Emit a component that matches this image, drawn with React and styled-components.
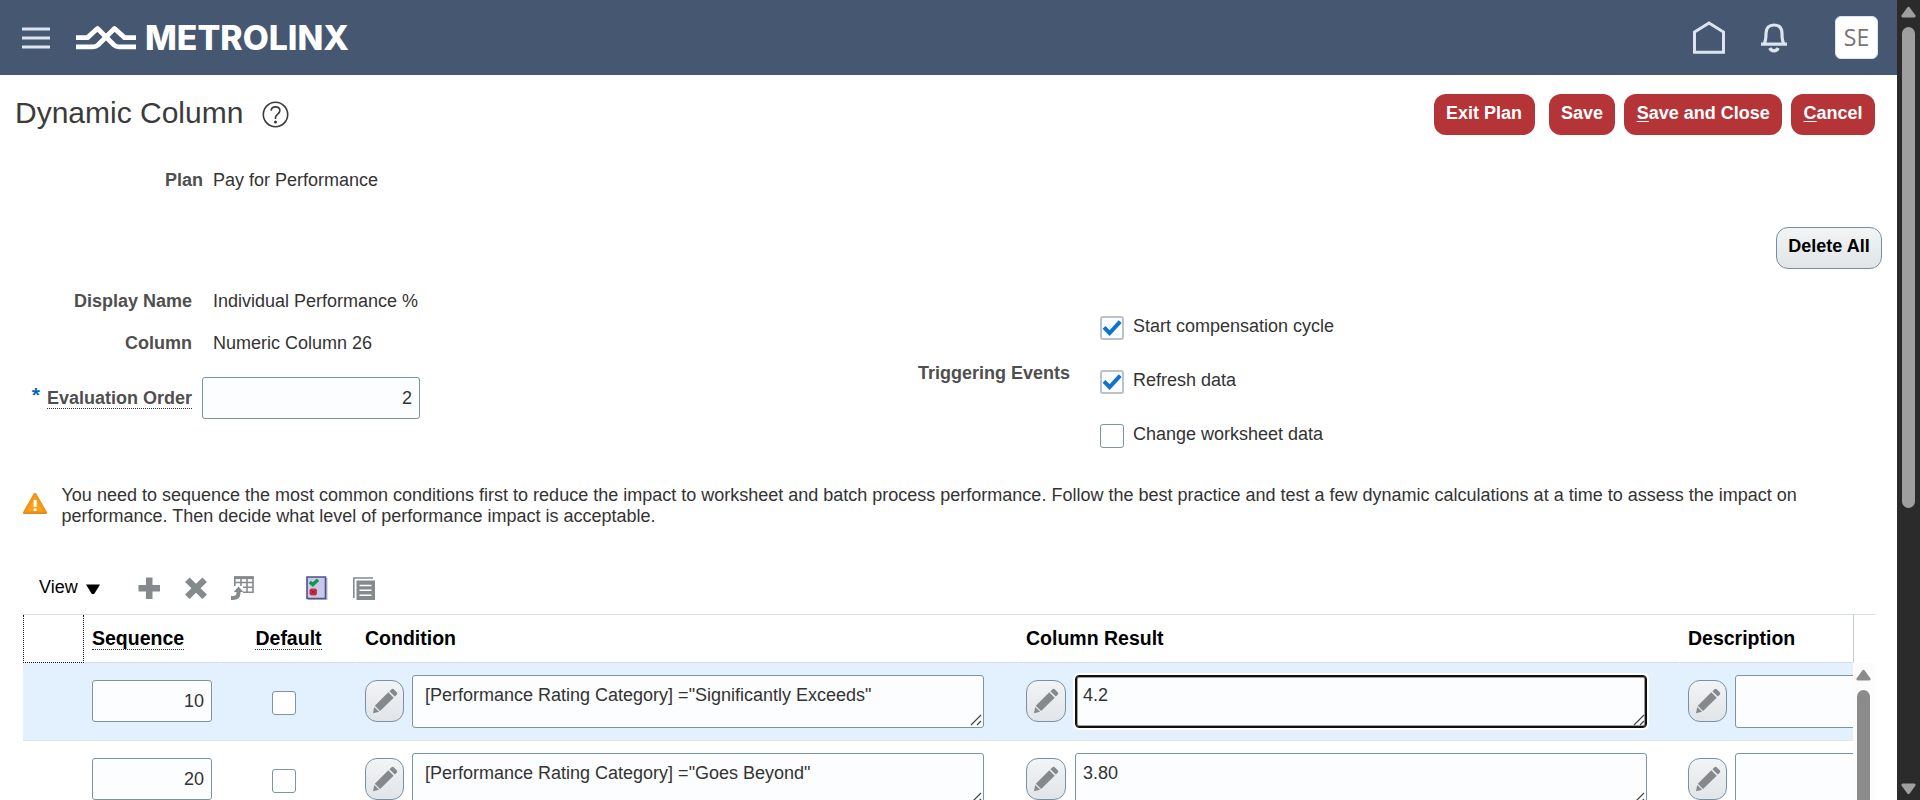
import React from "react";
import styled, { createGlobalStyle, css } from "styled-components";

const GlobalStyle = createGlobalStyle`
  *, *::before, *::after { box-sizing: border-box; }
  body {
    margin: 0;
    overflow: hidden;
    background: #fff;
    color: #333;
    font: 18px/20px "Liberation Sans", Arial, sans-serif;
  }
  svg { display: block; flex: none; }
`;

const Viewport = styled.div`
  display: flex;
  width: 1920px;
  height: 800px;
  overflow: hidden;
`;

const Page = styled.main`
  display: flex;
  flex-direction: column;
  width: 1897px;
  height: 800px;
  overflow: hidden;
`;

/* Scrollbars */
const Track = styled.div`
  display: flex;
  flex-direction: column;
  align-items: center;
  flex: none;
  width: ${(p) => p.$width}px;
  padding: 6px ${(p) => p.$inset || 0}px 0 0;
  background: ${(p) => p.$bg};
  color: ${(p) => p.$fg};
`;

const Thumb = styled.div`
  flex: none;
  width: 13px;
  height: ${(p) => p.$height}px;
  margin-top: ${(p) => p.$gap}px;
  border-radius: 7px;
  background: currentColor;
`;

const TrackEnd = styled.div`
  margin-top: auto;
  padding-bottom: 5px;
`;

/* Top banner */
const Banner = styled.header`
  display: flex;
  align-items: center;
  flex: none;
  height: 75px;
  padding: 0 19px 0 22px;
  background: #465771;
  color: #dbe4ef;
`;

const Brand = styled.svg`
  margin-left: 26px;
`;

const BrandText = styled.text`
  font-family: Inter, "Open Sans", sans-serif;
  font-size: 33.4px;
  font-weight: 800;
`;

const BannerActions = styled.div`
  display: flex;
  align-items: center;
  margin-left: auto;
`;

const BellIcon = styled.svg`
  margin: 0 48px 0 36px;
`;

const Avatar = styled.div`
  width: 43px;
  height: 43px;
  border: 1px solid #dbe4ef;
  border-radius: 6px;
  background: #fff;
  color: #767676;
  font: 23px/41px "Open Sans", "Noto Sans", sans-serif;
  text-align: center;
`;

/* Title bar */
const TitleBar = styled.div`
  display: flex;
  align-items: flex-start;
  flex: none;
  height: 95px;
  padding: 19px 22px 0 15px;
`;

const Title = styled.h1`
  margin: 2px 19px 0 0;
  color: #3b3b3b;
  font-size: 30px;
  font-weight: 400;
  line-height: 34px;
`;

const HelpIcon = styled.svg`
  margin-top: 7px;
`;

const TitleActions = styled.div`
  display: flex;
  gap: 9px;
  margin-left: auto;
`;

const buttonBase = css`
  border-radius: 12px;
  font: bold 18px/20px "Liberation Sans", Arial, sans-serif;
  white-space: nowrap;
`;

const PrimaryButton = styled.button`
  ${buttonBase}
  height: 41px;
  margin: 0 ${(p) => (p.$spaced ? 5 : 0)}px 0 0;
  padding: 0 12.4px 3px;
  border: 0;
  background: #b43438;
  color: #fff;
`;

const SecondaryButton = styled.button`
  ${buttonBase}
  width: 106px;
  height: 42px;
  padding: 0 0 5px;
  border: 1px solid #758ea5;
  background: linear-gradient(#f2f4f5, #e1e5e8);
  color: #000;
`;

const AccessKey = styled.span`
  text-decoration: underline;
  text-underline-offset: 2px;
  text-decoration-thickness: 1px;
`;

/* Form */
const Field = styled.div`
  display: flex;
  align-items: center;
  height: ${(p) => p.$height || 20}px;
  margin-top: ${(p) => p.$top || 0}px;
`;

const Label = styled.div`
  display: flex;
  justify-content: flex-end;
  flex: none;
  width: ${(p) => p.$width || 192}px;
  margin: ${(p) => p.$top || 0}px ${(p) => p.$gap || 21}px 0 0;
  color: #4f4f4f;
  font-weight: bold;
`;

const Hint = styled.span`
  height: ${(p) => p.$height || 21}px;
  border-bottom: 1px dotted #333;
`;

const Required = styled.span`
  margin: -3px 7px 0 0;
  color: #0a68b0;
  font-size: 21px;
`;

const NumberInput = styled.div`
  flex: none;
  width: ${(p) => p.$width}px;
  height: 42px;
  padding: 10px 7px 0;
  border: 1px solid #7d95a3;
  border-radius: 3px;
  background: #fcfdfe;
  color: #333;
  text-align: right;
`;

const ActionRow = styled.div`
  display: flex;
  justify-content: flex-end;
  margin-top: 37px;
  padding-right: 15px;
`;

const FormColumns = styled.section`
  display: grid;
  grid-template-columns: 900px 1fr;
  flex: none;
  height: 216px;
`;

const FormColumn = styled.div`
  padding-top: ${(p) => p.$top}px;
`;

const EventField = styled.div`
  display: flex;
  align-items: flex-start;
`;

const EventList = styled.div`
  display: flex;
  flex-direction: column;
  gap: 30px;
`;

const EventOption = styled.div`
  display: flex;
  gap: 9px;
  height: 24px;
`;

const Box = styled.span`
  display: block;
  flex: none;
  width: 24px;
  height: 24px;
  border: ${(p) => (p.$checked ? "2px solid #bac3cc" : "1px solid #7d95a3")};
  border-radius: 3px;
  background: ${(p) => (p.$checked ? "#fcfdfe" : "#fff")};
`;

/* Warning */
const Notice = styled.div`
  display: flex;
  flex: none;
  height: 91px;
  padding: 0 22px 0 22px;
  line-height: 21px;
`;

const NoticeText = styled.p`
  margin: 0 0 0 13.5px;
`;

const WarningIcon = styled.svg`
  margin-top: 7px;
`;

/* Toolbar */
const Toolbar = styled.div`
  display: flex;
  align-items: flex-start;
  flex: none;
  height: 38px;
  padding-left: 39px;
  color: #858a8d;
`;

const MenuButton = styled.div`
  display: flex;
  align-items: flex-start;
  gap: 8px;
  width: 99px;
  padding-top: 1px;
  color: #000;
`;

const Caret = styled.svg`
  margin-top: 7px;
`;

const ToolIcon = styled.svg`
  margin-right: ${(p) => p.$gap || 0}px;
`;

/* Table */
const Table = styled.section`
  flex: none;
  width: 1852px;
  margin-left: 23px;
  border-top: 1px solid #d6dfe6;
`;

const columns = "62px 136px 136px 662px 661px 1fr";

const HeaderRow = styled.div`
  display: grid;
  grid-template-columns: ${columns};
  width: 1831px;
  height: 48px;
  border-right: 1px solid #c4ccd2;
`;

const HeaderCell = styled.div`
  display: flex;
  justify-content: ${(p) => (p.$center ? "center" : "flex-start")};
  padding: 12px 0 0 ${(p) => p.$pad || 0}px;
  border-bottom: 1px solid #d6dfe6;
  border-right: 1px solid #fff;
  color: #000;
  font-size: 19.5px;
  font-weight: bold;
  line-height: 22px;
`;

const CornerCell = styled.div`
  width: 61px;
  border: 1px dotted #111;
  border-top: 0;
`;

const TableBody = styled.div`
  display: flex;
  height: 138px;
`;

const Rows = styled.div`
  width: 1830px;
  overflow: hidden;
`;

const Row = styled.div`
  display: grid;
  grid-template-columns: ${columns};
  height: 78px;
  border-bottom: 1px solid #e3e7ea;
  background: ${(p) => (p.$selected ? "#e3f1ff" : "#fff")};
`;

const Cell = styled.div`
  display: flex;
  min-width: 0;
  padding: 17px 0 0 ${(p) => p.$left}px;
`;

const PencilButton = styled.button`
  display: flex;
  align-items: center;
  justify-content: center;
  flex: none;
  width: ${(p) => p.$width}px;
  height: 42px;
  margin: 0;
  padding: 0;
  border: 1px solid #7590a8;
  border-radius: 12px;
  background: linear-gradient(#f2f4f5, #e1e5e8);
`;

const TextBox = styled.div`
  display: flex;
  justify-content: space-between;
  flex: none;
  width: 572px;
  height: 53px;
  margin: -5px 0 0 ${(p) => p.$gap}px;
  padding: 9px 1px 1px 7px;
  border: 1px solid #7d95a3;
  border-radius: 3px;
  background: #fcfdfe;
  white-space: pre;
  ${(p) =>
    p.$focused &&
    css`
      border-color: #101010;
      border-radius: 4px;
      box-shadow: inset 0 0 0 1px #101010, inset 0 0 0 2px #a0a09e, 0 0 0 2px #fff;
    `}
`;

const Grip = styled.svg`
  align-self: flex-end;
`;

const Pencil = () => (
  <svg width="26" height="26" viewBox="0 0 26 26" fill="#85898c">
    <path d="M17.4 3.2 22.8 8.6 24.7 6.7C25.5 5.9 25.4 5 24.7 4.3L21.7 1.3C21 .6 20.1.6 19.3 1.4Z" />
    <path d="M16.3 4.3 21.7 9.7 8.1 23.1 2.8 17.8Z" />
    <path d="M2.2 18.9 7.1 23.7 1 25.2Z" />
  </svg>
);

const ResizeGrip = () => (
  <Grip width="12" height="12" viewBox="0 0 12 12" stroke="#444" strokeWidth="1.2">
    <path d="M1 11 11 1M7 11 11 7" />
  </Grip>
);

const Checkbox = ({ checked }) => (
  <Box $checked={checked}>
    {checked && (
      <svg width="20" height="20" viewBox="0 0 20 20" fill="none" stroke="#0f74d1" strokeWidth="4">
        <path d="M2 9.3 7.6 15 18.2 3.6" />
      </svg>
    )}
  </Box>
);

const ArrowIcon = ({ down }) => (
  <svg width="15" height="12" viewBox="0 0 15 12" fill="currentColor">
    <path
      transform={down ? "rotate(180 7.5 6)" : undefined}
      d="M6.3 1.5Q7.5 0 8.7 1.5L14.5 9.4Q15 11.4 13.2 11.4H1.8Q0 11.4 .5 9.4Z"
    />
  </svg>
);

const Logo = () => (
  <Brand width="290" height="40" viewBox="0 0 290 40">
    <g fill="none" stroke="#fff" strokeWidth="4.8" strokeLinejoin="round">
      <path d="M0 19.6H11.500L21.500 10.500 38 27Q40 28.800 43 28.800H60" />
      <path d="M60 19.600H48.500L38.500 10.500 22 27Q20 28.800 17 28.800H0" />
    </g>
    <BrandText x="69" y="32" fill="#fff" textLength="204" lengthAdjust="spacingAndGlyphs">
      METROLINX
    </BrandText>
  </Brand>
);

const rows = [
  { seq: 10, condition: ' [Performance Rating Category] ="Significantly Exceeds"', result: "4.2", selected: true },
  { seq: 20, condition: ' [Performance Rating Category] ="Goes Beyond"', result: "3.80" },
];

const events = [
  ["Start compensation cycle", true],
  ["Refresh data", true],
  ["Change worksheet data", false],
];

export default function App() {
  return (
    <Viewport>
      <GlobalStyle />
      <Page>
        <Banner>
          <svg width="28" height="22" viewBox="0 0 28 22" fill="currentColor">
            <path d="M0 .5H28V3.500H0ZM0 9.500H28V12.500H0ZM0 18.500H28V21.500H0Z" />
          </svg>
          <Logo />
          <BannerActions>
            <svg width="32" height="33" viewBox="0 0 32 33" fill="none" stroke="currentColor" strokeWidth="3">
              <path d="M1.500 31.200V11L16 2 30.500 11V31.200Z" />
            </svg>
            <BellIcon width="26" height="30" viewBox="0 0 26 30" fill="none" stroke="currentColor" strokeWidth="3.2">
              <path d="M0 21.200H26M3 21C5 18 5 15 5 10.500C5 5 8 2 13 2S21 5 21 10.500C21 15 21 18 23 21" />
              <path d="M8.800 25Q10 27.800 13 27.800T17.200 25" />
            </BellIcon>
            <Avatar>SE</Avatar>
          </BannerActions>
        </Banner>

        <TitleBar>
          <Title>Dynamic Column</Title>
          <HelpIcon width="27" height="27" viewBox="0 0 27 27" fill="none" stroke="#3b3b3b" strokeWidth="1.6">
            <circle cx="13.500" cy="13.500" r="12.200" />
            <path d="M9.200 9.800C9.200 7.200 11 5.900 13.500 5.900S17.900 7.300 17.900 9.600C17.900 13 13.500 13.200 13.500 16.800V18" />
            <circle cx="13.500" cy="21" r="1.500" fill="#3b3b3b" stroke="none" />
          </HelpIcon>
          <TitleActions>
            <PrimaryButton $spaced>Exit Plan</PrimaryButton>
            <PrimaryButton>Save</PrimaryButton>
            <PrimaryButton>
              <AccessKey>S</AccessKey>ave and Close
            </PrimaryButton>
            <PrimaryButton>
              <AccessKey>C</AccessKey>ancel
            </PrimaryButton>
          </TitleActions>
        </TitleBar>

        <Field>
          <Label $width={203} $gap={10}>Plan</Label>
          Pay for Performance
        </Field>

        <ActionRow>
          <SecondaryButton>Delete All</SecondaryButton>
        </ActionRow>

        <FormColumns>
          <FormColumn $top={22}>
            <Field>
              <Label>Display Name</Label>
              Individual Performance %
            </Field>
            <Field $top={22}>
              <Label>Column</Label>
              Numeric Column 26
            </Field>
            <Field $top={24} $height={42}>
              <Label $gap={10}>
                <Required>*</Required>
                <Hint>Evaluation Order</Hint>
              </Label>
              <NumberInput $width={218}>2</NumberInput>
            </Field>
          </FormColumn>
          <FormColumn $top={47}>
            <EventField>
              <Label $width={170} $gap={30} $top={47}>
                Triggering Events
              </Label>
              <EventList>
                {events.map(([name, checked]) => (
                  <EventOption key={name}>
                    <Checkbox checked={checked} />
                    {name}
                  </EventOption>
                ))}
              </EventList>
            </EventField>
          </FormColumn>
        </FormColumns>

        <Notice>
          <WarningIcon width="26" height="23" viewBox="0 0 26 23">
            <path d="M13 2 23.800 20.600H2.200Z" fill="#f9a11b" stroke="#f0951a" strokeWidth="2.600" strokeLinejoin="round" />
            <path d="M1.500 21.300H24.500" stroke="#dc8a1e" strokeWidth="1.400" />
            <path d="M11.600 8H14.600V15H11.600ZM11.600 16.500H14.600V19H11.600Z" fill="#fff" />
          </WarningIcon>
          <NoticeText>
            You need to sequence the most common conditions first to reduce the impact to worksheet and batch process
            performance. Follow the best practice and test a few dynamic calculations at a time to assess the impact on
            performance. Then decide what level of performance impact is acceptable.
          </NoticeText>
        </Notice>

        <Toolbar>
          <MenuButton>
            View
            <Caret width="14" height="11" viewBox="0 0 14 11" fill="#000">
              <path d="M0 .5H14L8.500 9.500Q7 11 5.500 9.500Z" />
            </Caret>
          </MenuButton>
          <ToolIcon $gap={24} width="23" height="24" viewBox="0 0 23 24" fill="currentColor">
            <path d="M8 1.500H14.500V9H22V15.500H14.500V23H8V15.500H.5V9H8Z" />
          </ToolIcon>
          <ToolIcon $gap={23} width="23" height="24" viewBox="0 0 23 24" stroke="currentColor" strokeWidth="6.500">
            <path d="M2.300 3.800 19.700 20.800M19.700 3.800 2.300 20.800" />
          </ToolIcon>
          <ToolIcon $gap={52} width="23" height="24" viewBox="0 0 23 24" fill="none" stroke="currentColor">
            <path d="M3.800 10V1.800H22V16.200H12M3.800 6.500H22M12 11.300H22M10 3V10M16 3V16" strokeWidth="1.600" />
            <path d="M3 1.600H22.800" strokeWidth="3" />
            <path d="M0 22H2Q7.500 22 7.500 17V15" strokeWidth="4" />
            <path d="M2.600 16 7.500 10.500 12.400 16Z" fill="currentColor" stroke="none" />
          </ToolIcon>
          <ToolIcon $gap={25} width="22" height="24" viewBox="0 0 22 24">
            <path d="M2 2H21.500V24H2Z" fill="#b9b9c4" />
            <path d="M1 1H19.500V22.500H1Z" fill="#c9c8ec" stroke="#50508a" strokeWidth="1.600" />
            <path d="M3.800 6 6.800 8.600 12 3.800" fill="none" stroke="#12984a" strokeWidth="3.400" />
            <path d="M5 12.500H9.500L11 14V18L9.500 19.500H5L3.500 18V14Z" fill="#c9323b" />
            <path d="M5 14 9.500 18M9.500 14 5 18" stroke="#8f1d26" strokeWidth="1" />
          </ToolIcon>
          <ToolIcon width="23" height="24" viewBox="0 0 23 24">
            <path d="M.8 22V2H20" fill="none" stroke="currentColor" strokeWidth="1.600" />
            <path d="M3.500 4.500H22V24H3.500Z" fill="currentColor" />
            <path d="M6.500 9.500H18.500M6.500 14.300H18.500M6.500 19.200H18.500" stroke="#fff" strokeWidth="1.500" />
          </ToolIcon>
        </Toolbar>

        <Table>
          <HeaderRow>
            <CornerCell />
            <HeaderCell $pad={7}>
              <Hint $height={23}>Sequence</Hint>
            </HeaderCell>
            <HeaderCell $center>
              <Hint $height={23}>Default</Hint>
            </HeaderCell>
            <HeaderCell $pad={8}>Condition</HeaderCell>
            <HeaderCell $pad={7}>Column Result</HeaderCell>
            <HeaderCell $pad={8}>Description</HeaderCell>
          </HeaderRow>
          <TableBody>
            <Rows>
              {rows.map((row) => (
                <Row key={row.seq} $selected={row.selected}>
                  <Cell />
                  <Cell $left={7}>
                    <NumberInput $width={120}>{row.seq}</NumberInput>
                  </Cell>
                  <Cell $left={51}>
                    <Field $height={46}>
                      <Checkbox />
                    </Field>
                  </Cell>
                  <Cell $left={8}>
                    <PencilButton $width={39}>
                      <Pencil />
                    </PencilButton>
                    <TextBox $gap={8}>
                      {row.condition}
                      <ResizeGrip />
                    </TextBox>
                  </Cell>
                  <Cell $left={7}>
                    <PencilButton $width={40}>
                      <Pencil />
                    </PencilButton>
                    <TextBox $gap={9} $focused={row.selected}>
                      {row.result}
                      <ResizeGrip />
                    </TextBox>
                  </Cell>
                  <Cell $left={8}>
                    <PencilButton $width={39}>
                      <Pencil />
                    </PencilButton>
                    <TextBox $gap={8} />
                  </Cell>
                </Row>
              ))}
            </Rows>
            <Track $width={22} $inset={1} $bg="#fcfcfc" $fg="#8b8b8b">
              <ArrowIcon />
              <Thumb $gap={9} $height={600} />
            </Track>
          </TableBody>
        </Table>
      </Page>
      <Track $width={23} $bg="#2b2b2b" $fg="#9f9f9f">
        <ArrowIcon />
        <Thumb $gap={9} $height={481} />
        <TrackEnd>
          <ArrowIcon down />
        </TrackEnd>
      </Track>
    </Viewport>
  );
}
